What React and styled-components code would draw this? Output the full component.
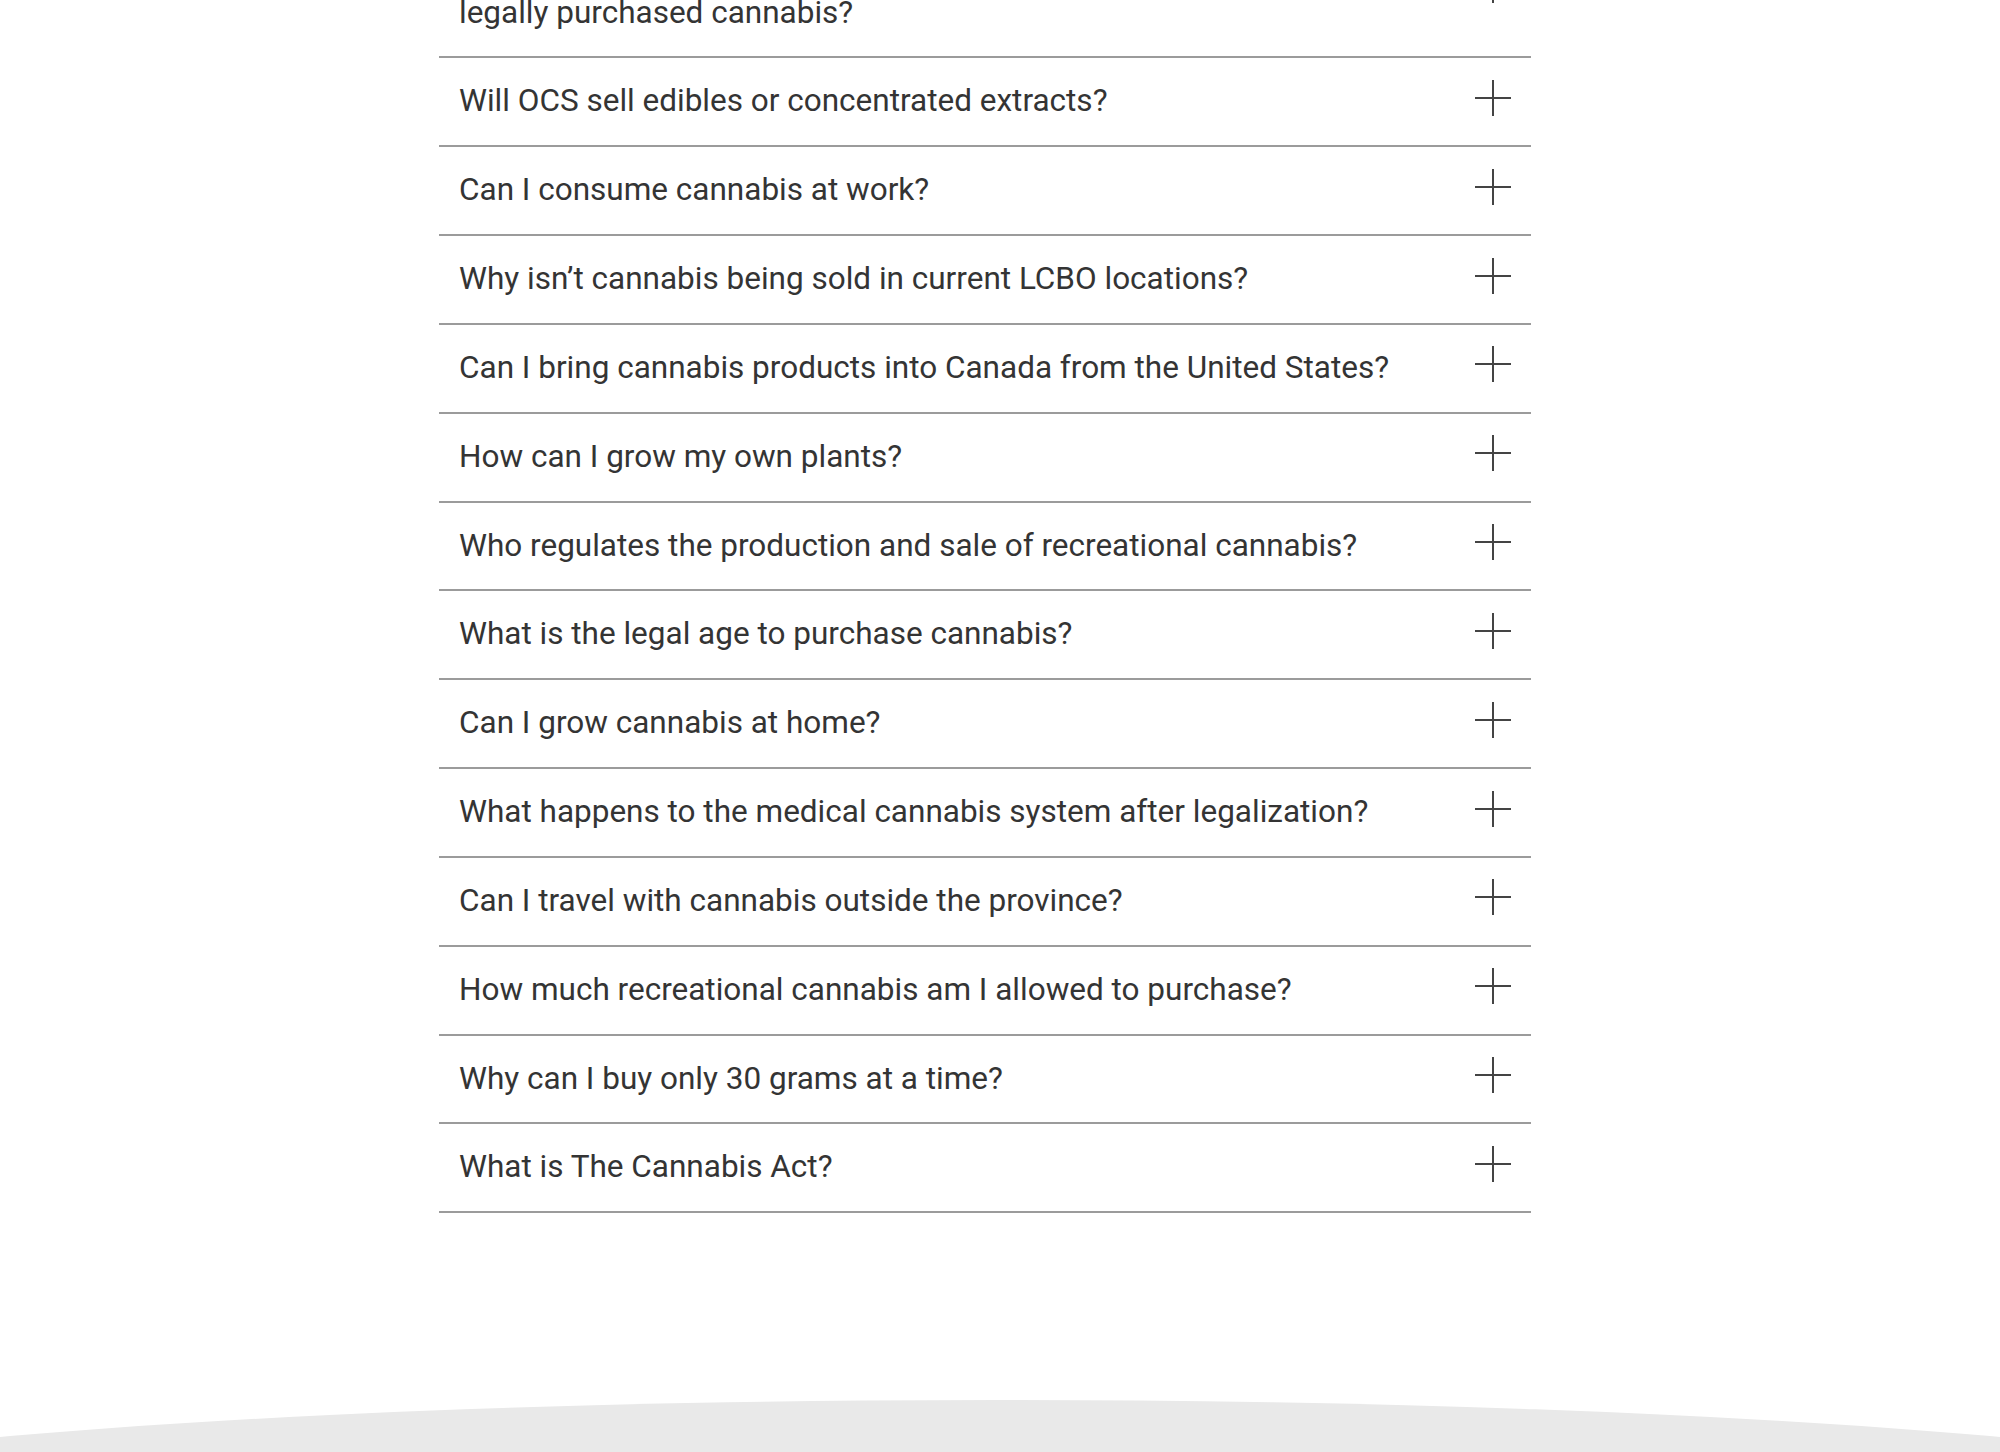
import React from 'react'
import styled, { createGlobalStyle } from 'styled-components'

const Global = createGlobalStyle`
  body {
    margin: 0;
    background: #fff;
    font-family: Roboto, "Liberation Sans", sans-serif;
    overflow: hidden;
  }
`

const Page = styled.div`
  display: flex;
  flex-direction: column;
  min-height: 1452px;
`

const List = styled.ul`
  list-style: none;
  margin: -78.5px 0 0 439px;
  padding: 0;
  width: 1092px;
`

const Item = styled.li`
  display: flex;
  align-items: center;
  gap: 48px;
  padding: 19px 20px 19.85px 20px;
  border-bottom: 2px solid #9b9b9b;
  cursor: pointer;
`

const Question = styled.span`
  flex: 1;
  font-size: 31.5px;
  line-height: 48px;
  color: #343434;
`

const PlusIcon = styled.svg`
  flex: none;
  width: 36px;
  height: 36px;
  margin-bottom: 7px;
`

const Footer = styled.footer`
  margin-top: auto;
  height: 52px;
  background: #e9e9e9;
  clip-path: ellipse(1400px 123px at 50% 123px);
`

const questions = [
  ['Now that cannabis is legal, where am I allowed to consume', 'legally purchased cannabis?'],
  ['Will OCS sell edibles or concentrated extracts?'],
  ['Can I consume cannabis at work?'],
  ['Why isn’t cannabis being sold in current LCBO locations?'],
  ['Can I bring cannabis products into Canada from the United States?'],
  ['How can I grow my own plants?'],
  ['Who regulates the production and sale of recreational cannabis?'],
  ['What is the legal age to purchase cannabis?'],
  ['Can I grow cannabis at home?'],
  ['What happens to the medical cannabis system after legalization?'],
  ['Can I travel with cannabis outside the province?'],
  ['How much recreational cannabis am I allowed to purchase?'],
  ['Why can I buy only 30 grams at a time?'],
  ['What is The Cannabis Act?'],
]

const Plus = () => (
  <PlusIcon viewBox="0 0 36 36" aria-hidden="true">
    <path d="M18 0v36M0 18h36" stroke="#444" strokeWidth="2" fill="none" />
  </PlusIcon>
)

export default function App() {
  return (
    <Page>
      <Global />
      <List>
        {questions.map((lines, i) => (
          <Item key={i}>
            <Question>
              {lines.map((l, j) => (
                <React.Fragment key={j}>
                  {j > 0 && <br />}
                  {l}
                </React.Fragment>
              ))}
            </Question>
            <Plus />
          </Item>
        ))}
      </List>
      <Footer />
    </Page>
  )
}
